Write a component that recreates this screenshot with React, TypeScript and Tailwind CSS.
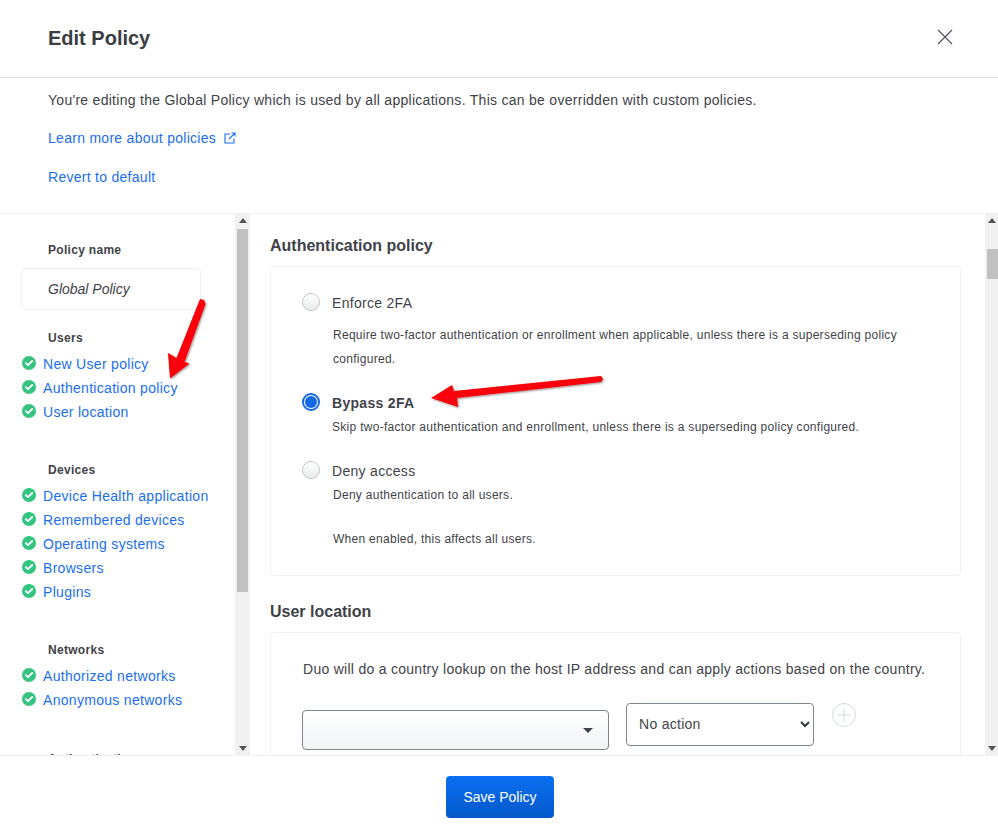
const CheckDot = () => (
  <svg width="14" height="14" viewBox="0 0 14 14" className="shrink-0 mb-[2px]">
    <circle cx="7" cy="7" r="7" fill="#35c481" />
    <path d="M3.8 7.2 L6 9.2 L10.2 5" fill="none" stroke="#fff" strokeWidth="1.8" strokeLinecap="round" strokeLinejoin="round" />
  </svg>
);

const NavGroup = ({ title, links, className }: { title: string; links: string[]; className: string }) => (
  <div className={className}>
    <div className="pl-[48px] text-[12px] leading-[16px] font-bold tracking-[0.3px] text-[#3f4349]">{title}</div>
    <ul className="mt-[6px]">
      {links.map((link) => (
        <li key={link} className="flex items-center h-[24px] pl-[22px] gap-[7px]">
          <CheckDot />
          <a className="text-[14px] tracking-[0.3px] text-[#1a6ff0] whitespace-nowrap">{link}</a>
        </li>
      ))}
    </ul>
  </div>
);

const Radio = ({ checked }: { checked?: boolean }) =>
  checked ? (
    <span className="w-[18px] h-[18px] mb-[2px] rounded-full border-2 border-[#1467e6] bg-white flex items-center justify-center shrink-0">
      <span className="w-[12px] h-[12px] rounded-full bg-[#1467e6]" />
    </span>
  ) : (
    <span className="w-[18px] h-[18px] mb-[2px] rounded-full border border-[#c4c8cc] bg-gradient-to-b from-white to-[#e9ebee] shrink-0" />
  );

const ScrollTrack = ({ wide, thumbTop, thumbHeight }: { wide: boolean; thumbTop: string; thumbHeight: string }) => (
  <div className={`${wide ? "w-[15px]" : "w-[13px]"} shrink-0 bg-[#f1f1f1] flex flex-col items-center justify-between py-[4px] relative`}>
    <div className="w-0 h-0 border-x-[4px] border-x-transparent border-b-[5px] border-b-[#555]" />
    <div className={`absolute ${thumbTop} ${thumbHeight} ${wide ? "left-[2px] right-[2px]" : "left-[2px] right-0"} bg-[#c1c1c1]`} />
    <div className="w-0 h-0 border-x-[4px] border-x-transparent border-t-[5px] border-t-[#555]" />
  </div>
);

export default function App() {
  return (
    <div className="w-[998px] h-[833px] bg-white relative overflow-hidden flex flex-col text-[#3f4349] font-['Liberation_Sans',Arial,sans-serif]">
      <header className="h-[78px] shrink-0 border-b border-[#e2e2e2] flex items-center justify-between pl-[48px] pr-[45px] pb-[2px]">
        <h1 className="text-[20px] font-bold text-[#3a3d42]">Edit Policy</h1>
        <svg width="16" height="16" viewBox="0 0 16 16" className="mb-[2px]">
          <path d="M1 1 L15 15 M15 1 L1 15" stroke="#4a4f57" strokeWidth="1.1" />
        </svg>
      </header>

      <div className="h-[136px] shrink-0 border-b border-[#f1f1f1] pl-[48px] pt-[13px] text-[14px] tracking-[0.28px]">
        <p className="leading-[18px]">You're editing the Global Policy which is used by all applications. This can be overridden with custom policies.</p>
        <a className="mt-[20px] flex items-center gap-[8px] leading-[18px] text-[#1a6ff0]">
          Learn more about policies
          <svg width="12" height="12" viewBox="0 0 12 12" fill="none" stroke="#1a6ff0" strokeWidth="1.1">
            <path d="M6 2 H1 V11 H10 V6.5 M5 7 L11 1 M7.5 1 H11 V4.5" />
          </svg>
        </a>
        <a className="block mt-[21px] leading-[18px] text-[#1a6ff0]">Revert to default</a>
      </div>

      <div className="flex-1 min-h-0 flex">
        <div className="w-[235px] shrink-0 overflow-hidden pt-[28px]">
          <div className="pl-[48px] text-[12px] leading-[16px] font-bold tracking-[0.3px] text-[#3f4349]">Policy name</div>
          <div className="ml-[21px] mt-[10px] w-[180px] h-[42px] border border-[#f1f1f1] rounded-[4px] flex items-center pl-[26px] text-[14px] italic">
            Global Policy
          </div>
          <NavGroup className="mt-[20px]" title="Users" links={["New User policy", "Authentication policy", "User location"]} />
          <NavGroup className="mt-[38px]" title="Devices" links={["Device Health application", "Remembered devices", "Operating systems", "Browsers", "Plugins"]} />
          <NavGroup className="mt-[38px]" title="Networks" links={["Authorized networks", "Anonymous networks"]} />
          <div className="mt-[39px] pl-[48px] text-[12px] leading-[16px] font-bold tracking-[0.3px]">Authentication</div>
        </div>
        <ScrollTrack wide thumbTop="top-[15px]" thumbHeight="h-[363px]" />

        <div className="flex-1 min-w-0 overflow-hidden pl-[20px] pr-[24px] pt-[22px]">
          <h2 className="text-[16px] leading-[20px] font-bold">Authentication policy</h2>
          <div className="mt-[10px] h-[310px] border border-[#f1f1f1] rounded-[4px] pl-[31px] pr-[30px] pt-[26px]">
            <div className="flex items-center gap-[12px] h-[20px]">
              <Radio />
              <span className="text-[14px] tracking-[0.3px]">Enforce 2FA</span>
            </div>
            <p className="mt-[10px] ml-[31px] text-[12px] leading-[24px] tracking-[0.28px]">
              Require two-factor authentication or enrollment when applicable, unless there is a superseding policy configured.
            </p>
            <div className="mt-[22px] flex items-center gap-[12px] h-[20px]">
              <Radio checked />
              <span className="text-[14px] font-bold tracking-[0.3px]">Bypass 2FA</span>
            </div>
            <p className="mt-[5px] ml-[30px] text-[12px] leading-[18px] tracking-[0.29px]">
              Skip two-factor authentication and enrollment, unless there is a superseding policy configured.
            </p>
            <div className="mt-[25px] flex items-center gap-[12px] h-[20px]">
              <Radio />
              <span className="text-[14px] tracking-[0.3px]">Deny access</span>
            </div>
            <p className="mt-[5px] ml-[31px] text-[12px] leading-[18px] tracking-[0.28px]">Deny authentication to all users.</p>
            <p className="mt-[26px] ml-[31px] text-[12px] leading-[18px] tracking-[0.28px]">When enabled, this affects all users.</p>
          </div>

          <h2 className="mt-[26px] text-[16px] leading-[20px] font-bold">User location</h2>
          <div className="mt-[10px] h-[200px] border border-[#f1f1f1] rounded-[4px] pl-[31px] pt-[27px]">
            <p className="ml-[1px] text-[14px] leading-[18px] tracking-[0.28px]">
              Duo will do a country lookup on the host IP address and can apply actions based on the country.
            </p>
            <div className="mt-[25px] flex items-start">
              <div className="mt-[7px] w-[307px] h-[40px] border border-[#7d858e] rounded-[4px] bg-gradient-to-b from-white to-[#f1f3f5] flex items-center justify-end pr-[15px]">
                <div className="w-0 h-0 border-x-[5px] border-x-transparent border-t-[5px] border-t-[#3f4349]" />
              </div>
              <div className="ml-[17px] w-[188px] h-[43px] border border-[#7d858e] rounded-[4px] bg-white flex items-center justify-between pl-[12px] pr-[3px] text-[14px] tracking-[0.28px]">
                No action
                <svg width="10" height="7" viewBox="0 0 10 7" fill="none" stroke="#33373c" strokeWidth="2">
                  <path d="M1 1 L5 5 L9 1" />
                </svg>
              </div>
              <svg width="24" height="24" viewBox="0 0 24 24" fill="none" className="ml-[18px]">
                <circle cx="12" cy="12" r="11.5" stroke="#d3dae3" />
                <path d="M12 5 V19 M5 12 H19" stroke="#d3dae3" />
              </svg>
            </div>
          </div>
        </div>
        <ScrollTrack wide={false} thumbTop="top-[35px]" thumbHeight="h-[30px]" />
      </div>

      <footer className="h-[78px] shrink-0 border-t border-[#f1f1f1] bg-white flex items-start justify-center pt-[20px] pl-[2px]">
        <button className="w-[108px] h-[42px] rounded-[4px] bg-gradient-to-b from-[#0b70f2] to-[#0458c9] text-white text-[14px]">
          Save Policy
        </button>
      </footer>

      {/* annotation arrows drawn over the screenshot */}
      <svg width="998" height="833" className="absolute inset-0 pointer-events-none">
        <defs>
          <filter id="arrowShadow" x="-20%" y="-20%" width="140%" height="140%">
            <feDropShadow dx="1" dy="1" stdDeviation="1" floodColor="#000" floodOpacity="0.45" />
          </filter>
        </defs>
        <g filter="url(#arrowShadow)" fill="#fb0007">
          <path d="M200 299 L204 300 L205.500 304 L184.500 362 L189.500 363.500 L170 378.500 L168 353 L176.500 358 Z" />
          <path d="M601 376 L603 379 L601 382 L457 398 L458 407 L431 398 L452 385 L454 391 Z" />
        </g>
      </svg>
    </div>
  );
}
